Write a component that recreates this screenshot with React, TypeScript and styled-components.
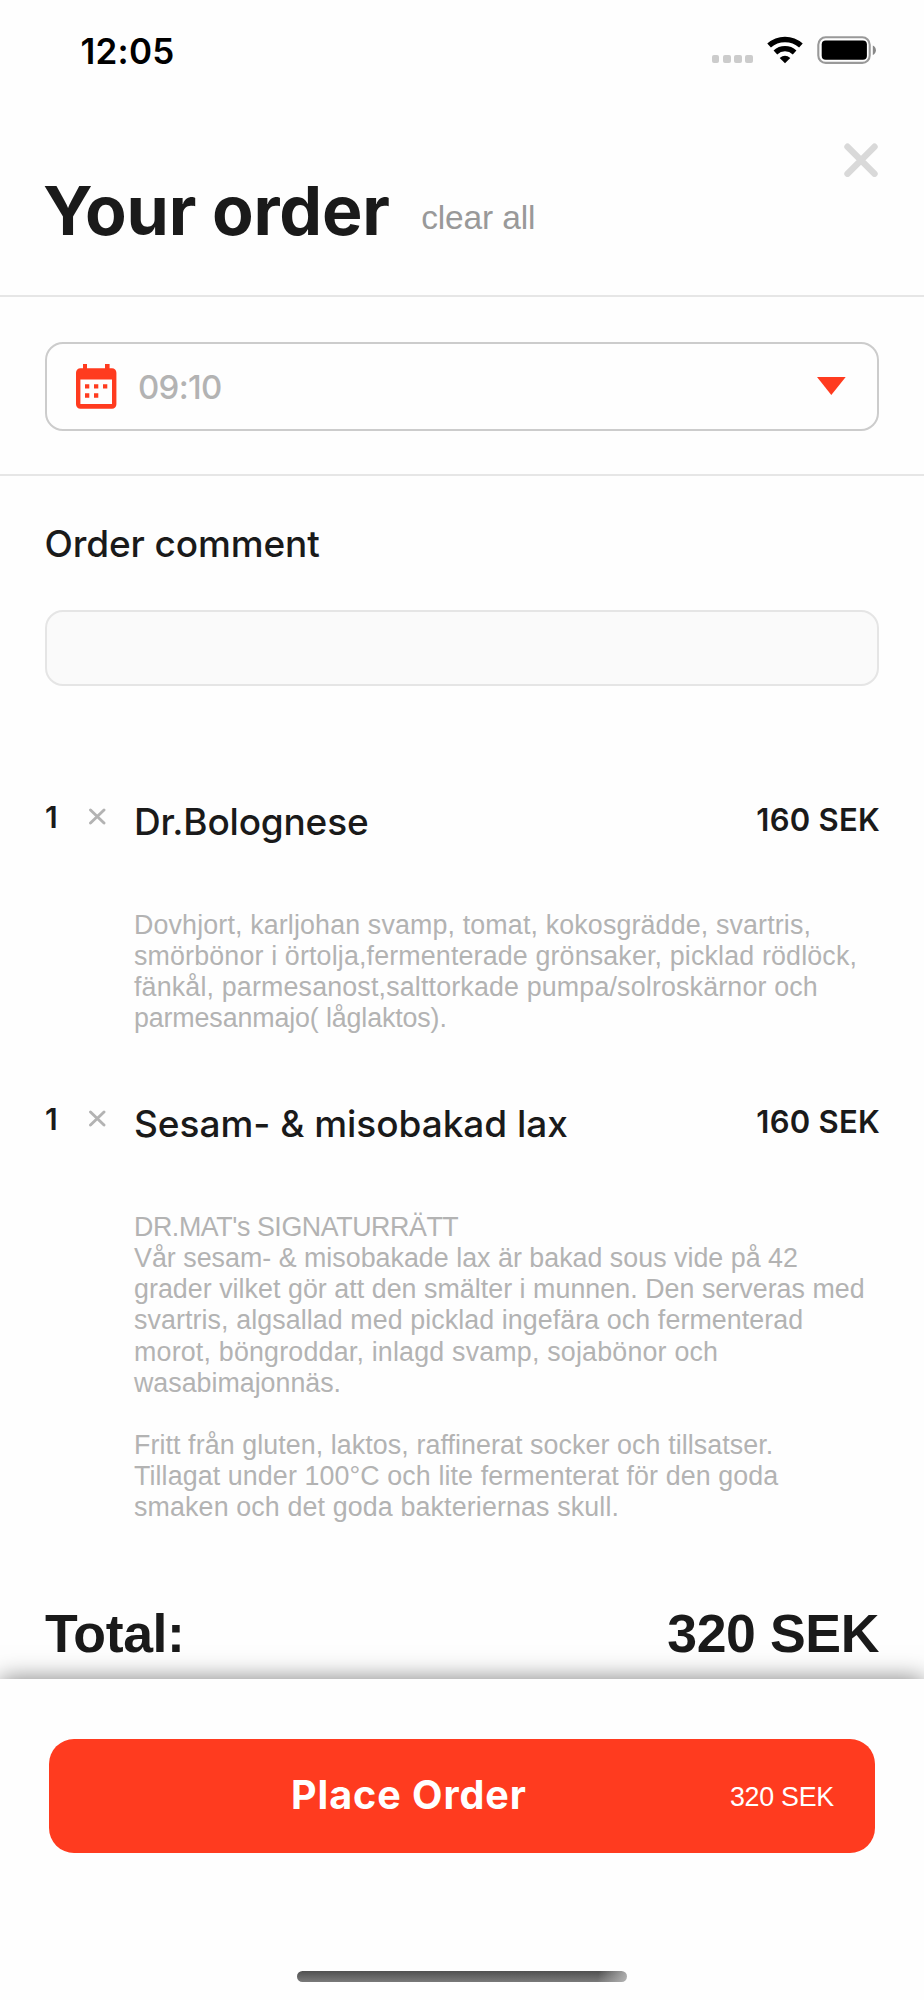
import React from "react";
import styled, { createGlobalStyle } from "styled-components";

const ink = "#1a1a1a";
const accent = "#ff3b1f";
const muted = "#b3b3b3";
const line = "#e6e6e6";
const helvetica = '"Liberation Sans", Arial, sans-serif';
const inter = 'Inter, "Liberation Sans", sans-serif';

const GlobalStyle = createGlobalStyle`
  *, *::before, *::after { box-sizing: border-box; }
  body { margin: 0; background: #fefefe; font-family: ${helvetica}; color: ${ink}; }
  h1, h2, h3, p { margin: 0; font-weight: inherit; }
  button { border: 0; padding: 0; background: none; font: inherit; color: inherit; text-align: left; }
  svg { display: block; }
`;

const Screen = styled.main`
  display: flex;
  flex-direction: column;
  width: 924px;
  height: 2000px;
  overflow: hidden;
  background: #fefefe;
`;

const StatusBar = styled.div`
  display: flex;
  justify-content: space-between;
  align-items: flex-start;
  height: 100px;
  padding: 31px 48px 0 80.6px;
`;

const Clock = styled.span`
  font: 600 35px/40px ${inter};
  letter-spacing: 0.2px;
  color: #000;
`;

const StatusIcons = styled.div`
  display: flex;
  align-items: flex-end;
  gap: 14px;
  padding-top: 5px;
`;

const SignalDots = styled.div`
  display: flex;
  gap: 3.6px;
  padding-bottom: 1px;
`;

const SignalDot = styled.i`
  width: 7.6px;
  height: 7.6px;
  border-radius: 2px;
  background: #ccc;
`;

const Header = styled.header`
  display: flex;
  align-items: flex-start;
  height: 197px;
  padding: 0 46px 0 44px;
  border-bottom: 2px solid ${line};
`;

const Title = styled.h1`
  margin: 70px 0 0 -1px;
  font: 700 68px/80px ${inter};
  letter-spacing: -0.22px;
`;

const ClearAll = styled.button`
  margin: 98px 0 0 31.5px;
  font-size: 33.5px;
  line-height: 40px;
  letter-spacing: -0.16px;
  color: #999;
`;

const CloseButton = styled.button`
  margin: 43px 0 0 auto;
`;

const DeliverySection = styled.section`
  height: 179px;
  padding: 45px 45px 0;
  border-bottom: 2px solid ${line};
`;

const TimeSelect = styled.button`
  display: flex;
  align-items: center;
  width: 100%;
  height: 89px;
  padding: 0 31px 0 29px;
  border: 2px solid #ccc;
  border-radius: 18px;
`;

const TimeValue = styled.span`
  flex: 1;
  margin: 1px 0 0 21px;
  font: 500 33px/40px ${inter};
  letter-spacing: -0.7px;
  color: ${muted};
`;

const CommentSection = styled.section`
  display: flex;
  flex-direction: column;
  gap: 43px;
  height: 314px;
  padding: 45px 45px 0;
`;

const CommentLabel = styled.label`
  margin-left: -0.5px;
  font: 500 37px/46px ${inter};
  letter-spacing: -0.12px;
`;

const CommentInput = styled.input`
  height: 76px;
  padding: 0 24px;
  border: 2px solid #e5e5e5;
  border-radius: 18px;
  background: #fafafa;
  font: 33px ${helvetica};
  outline: none;
`;

const OrderItem = styled.article<{ $height: number }>`
  display: grid;
  grid-template-columns: 43px 46px 1fr auto;
  grid-template-rows: 113px auto;
  align-items: start;
  height: ${(p) => p.$height}px;
  padding: 7px 44px 0 45px;
`;

const Quantity = styled.span`
  font: 600 30px/40px ${inter};
`;

const TimesIcon = styled.svg`
  margin-top: 11px;
`;

const ItemName = styled.h2<{ $tracking: number }>`
  font: 500 37px/50px ${inter};
  letter-spacing: ${(p) => p.$tracking}px;
`;

const Price = styled.span`
  font: 600 31px/46px ${inter};
  letter-spacing: 0.25px;
`;

const Description = styled.div`
  grid-column: 3 / -1;
  color: ${muted};
`;

const DescriptionLine = styled.p<{ $tracking: number }>`
  height: 31.15px;
  font-size: 26.8px;
  line-height: 31.15px;
  letter-spacing: ${(p) => p.$tracking}px;
  white-space: nowrap;
`;

const TotalRow = styled.div`
  display: flex;
  justify-content: space-between;
  height: 76px;
  padding: 0 45px;
  font: bold 53.6px/60px ${helvetica};
  letter-spacing: -0.4px;
`;

const CheckoutPanel = styled.footer`
  position: relative;
  display: flex;
  flex-direction: column;
  align-items: center;
  justify-content: space-between;
  flex: 1;
  padding: 60px 49px 18px;
  background: #fefefe;
  box-shadow: 0 0 23px rgba(0, 0, 0, 0.5);
`;

const PlaceOrderButton = styled.button`
  display: grid;
  grid-template-columns: 1fr auto;
  align-items: center;
  width: 826px;
  height: 114px;
  padding: 0 41px 0 242px;
  border-radius: 25px;
  background: ${accent};
  color: #fff;
`;

const ButtonLabel = styled.span`
  margin-bottom: 2px;
  font: 700 39.5px/46px ${inter};
  letter-spacing: 0.95px;
`;

const ButtonPrice = styled.span`
  margin-top: 2px;
  font-size: 26.8px;
  line-height: 32px;
  letter-spacing: -0.25px;
`;

const HomeIndicator = styled.div`
  width: 330px;
  height: 11px;
  border-radius: 6px;
  background:
    linear-gradient(100deg, transparent 91%, rgba(190, 190, 190, 0.85) 100%),
    linear-gradient(#505050, #7a7a7a);
`;

function WifiIcon() {
  return (
    <svg width="36" height="28" viewBox="0 0 36 28">
      <g fill="none" stroke="#000" strokeWidth="5.4">
        <path d="M2.1 9.6 A23.6 23.6 0 0 1 33.9 9.6" />
        <path d="M8.4 16.4 A14.2 14.2 0 0 1 27.6 16.4" />
      </g>
      <path d="M18 27.3 L12.7 21.9 Q18 17.6 23.3 21.9 Z" />
    </svg>
  );
}

function BatteryIcon() {
  return (
    <svg width="59" height="28" viewBox="0 0 59 28">
      <rect x="1.3" y="1.3" width="51.4" height="25.6" rx="7.4" fill="none" stroke="#999" strokeWidth="2.1" />
      <rect x="4.7" y="4.6" width="45.2" height="19.2" rx="4" />
      <path d="M55.8 9.6 Q58.9 11 58.9 14.3 Q58.9 17.6 55.8 19 Z" fill="#888" />
    </svg>
  );
}

function CloseIcon() {
  return (
    <svg width="34" height="34" viewBox="0 0 34 34">
      <path d="M3.5 3.7 L30.5 30.7 M30.5 3.7 L3.5 30.7" stroke="#d9d9d9" strokeWidth="6.4" strokeLinecap="round" />
    </svg>
  );
}

function CalendarIcon() {
  return (
    <svg width="41" height="45" viewBox="0 0 41 45" fill={accent}>
      <path d="M7 0h4v4.3h18V0h4.6v4.3H36a4.4 4.4 0 0 1 4.4 4.4v31.6a4.4 4.4 0 0 1-4.4 4.4H4.4A4.4 4.4 0 0 1 0 40.3V8.7A4.4 4.4 0 0 1 4.4 4.3H7zM4.4 15.5V40H36V15.5z" fillRule="evenodd" />
      <path d="M9 20.2h4.3v4.2H9zM18 20.2h4.3v4.2H18zM27 20.2h4.3v4.2H27zM9 29.3h4.3v4.4H9zM18 29.3h4.3v4.4H18z" />
    </svg>
  );
}

const ArrowSvg = styled.svg`
  margin-bottom: 1px;
`;

function DropdownArrow() {
  return (
    <ArrowSvg width="29" height="18" viewBox="0 0 29 18">
      <path d="M0 0 H28.7 L14.3 18 Z" fill={accent} />
    </ArrowSvg>
  );
}

type Line = [text: string, tracking: number];

const items: { name: string; tracking: number; height: number; lines: Line[] }[] = [
  {
    name: "Dr.Bolognese",
    tracking: -0.2,
    height: 302,
    lines: [
      ["Dovhjort, karljohan svamp, tomat, kokosgrädde, svartris,", 0.15],
      ["smörbönor i örtolja,fermenterade grönsaker, picklad rödlöck,", 0.16],
      ["fänkål, parmesanost,salttorkade pumpa/solroskärnor och", 0.17],
      ["parmesanmajo( låglaktos).", -0.12],
    ],
  },
  {
    name: "Sesam- & misobakad lax",
    tracking: -0.03,
    height: 511,
    lines: [
      ["DR.MAT's SIGNATURRÄTT", -0.42],
      ["Vår sesam- & misobakade lax är bakad sous vide på 42", 0.02],
      ["grader vilket gör att den smälter i munnen. Den serveras med", 0.04],
      ["svartris, algsallad med picklad ingefära och fermenterad", 0.09],
      ["morot, böngroddar, inlagd svamp, sojabönor och", 0.2],
      ["wasabimajonnäs.", 0],
      ["", 0],
      ["Fritt från gluten, laktos, raffinerat socker och tillsatser.", 0.09],
      ["Tillagat under 100°C och lite fermenterat för den goda", 0.11],
      ["smaken och det goda bakteriernas skull.", 0.14],
    ],
  },
];

export default function App() {
  return (
    <Screen>
      <GlobalStyle />
      <StatusBar>
        <Clock>12:05</Clock>
        <StatusIcons>
          <SignalDots>
            {[0, 1, 2, 3].map((dot) => (
              <SignalDot key={dot} />
            ))}
          </SignalDots>
          <WifiIcon />
          <BatteryIcon />
        </StatusIcons>
      </StatusBar>

      <Header>
        <Title>Your order</Title>
        <ClearAll>clear all</ClearAll>
        <CloseButton aria-label="Close">
          <CloseIcon />
        </CloseButton>
      </Header>

      <DeliverySection>
        <TimeSelect>
          <CalendarIcon />
          <TimeValue>09:10</TimeValue>
          <DropdownArrow />
        </TimeSelect>
      </DeliverySection>

      <CommentSection>
        <CommentLabel htmlFor="comment">Order comment</CommentLabel>
        <CommentInput id="comment" />
      </CommentSection>

      {items.map((item) => (
        <OrderItem key={item.name} $height={item.height}>
          <Quantity>1</Quantity>
          <TimesIcon width="18" height="18" viewBox="0 0 18 18">
            <path d="M2.5 2 L16 15 M16 2 L2.5 15" stroke={muted} strokeWidth="2.9" strokeLinecap="round" />
          </TimesIcon>
          <ItemName $tracking={item.tracking}>{item.name}</ItemName>
          <Price>160 SEK</Price>
          <Description>
            {item.lines.map(([text, tracking], i) => (
              <DescriptionLine key={i} $tracking={tracking}>
                {text}
              </DescriptionLine>
            ))}
          </Description>
        </OrderItem>
      ))}

      <TotalRow>
        <span>Total:</span>
        <span>320 SEK</span>
      </TotalRow>

      <CheckoutPanel>
        <PlaceOrderButton>
          <ButtonLabel>Place Order</ButtonLabel>
          <ButtonPrice>320 SEK</ButtonPrice>
        </PlaceOrderButton>
        <HomeIndicator />
      </CheckoutPanel>
    </Screen>
  );
}
